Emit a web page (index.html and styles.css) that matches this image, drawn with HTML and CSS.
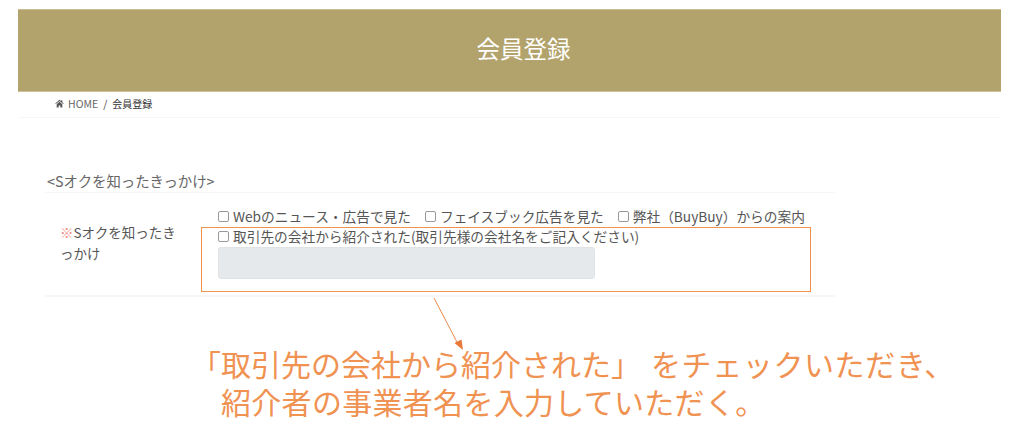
FILE: index.html
```html
<!DOCTYPE html>
<html lang="ja">
<head>
  <meta charset="UTF-8" />
  <title>会員登録</title>
  <link rel="stylesheet" href="styles.css">
</head>
<body>
  <div id="page">
    <header class="title-bar"><h1>会員登録</h1></header>

    <nav class="breadcrumb">
      <svg class="home-icon" viewBox="0 0 16 16" width="9" height="9"><path d="M8 1.5 0.5 8l1 1L8 3.5 14.500 9l1-1-2.500-2.200V2h-2v2zM3 9.500V15h3.500v-3.500h3V15H13V9.500L8 5z"/></svg>
      <span class="crumb-home">HOME</span>
      <span class="crumb-sep">/</span>
      <span class="crumb-now">会員登録</span>
    </nav>

    <section class="form-area">
      <h2>&lt;Sオクを知ったきっかけ&gt;</h2>
      <div class="form-row">
        <div class="row-label"><span class="req">※</span>Sオクを知ったき<br>っかけ</div>
        <div class="row-value">
          <div class="check-line">
            <label><input type="checkbox" />Webのニュース・広告で見た</label>
            <label><input type="checkbox" />フェイスブック広告を見た</label>
            <label><input type="checkbox" />弊社（BuyBuy）からの案内</label>
          </div>
          <div class="check-line">
            <label><input type="checkbox" />取引先の会社から紹介された(取引先様の会社名をご記入ください)</label>
          </div>
          <input type="text" class="company-input" disabled />
        </div>
      </div>
    </section>

    <!-- 注釈 -->
    <div class="note-box"></div>
    <svg class="note-arrow" width="60" height="60" viewBox="0 0 60 60">
      <line x1="7" y1="4" x2="31" y2="50" stroke="#e98a4c" stroke-width="1" />
      <polygon points="36,56 27.500,49 34.500,45.500" fill="#e8793a" />
    </svg>
    <div class="note-text">
      <p>「取引先の会社から紹介された」<span class="after-bracket">をチェックいただき、</span></p>
      <p class="second">紹介者の事業者名を入力していただく。</p>
    </div>
  </div>
</body>
</html>
```
FILE: styles.css
```css
* { box-sizing: border-box; }
html, body { margin: 0; height: 100%; }
body { background: #fff; font-family: "Noto Sans CJK JP", "Noto Sans", sans-serif; color: #555; overflow: hidden; }
#page { position: relative; width: 1024px; height: 444px; padding: 9px 23px 0 18px; }

.title-bar { height: 83px; padding: 0 0 3px 28px; background: #b2a26b; border-top: 1px solid #c9bd92; border-bottom: 1px solid #cdc29c; display: flex; align-items: center; justify-content: center; }
.title-bar h1 { margin: 0; font-size: 23.500px; font-weight: 400; color: #fff; line-height: 1; }

.breadcrumb { height: 26px; padding: 0 0 2px 37px; display: flex; align-items: center; gap: 3px; font-size: 10.500px; border-bottom: 1px solid #f7f7f7; color: #666; }
.home-icon { fill: #555; margin-right: 1px; }
.crumb-sep { margin: 0 2px; color: #444; }
.crumb-now { color: #333; font-size: 10px; }

.form-area { width: 790px; margin: 53px 0 0 27px; }
.form-area h2 { margin: 0; padding-left: 2px; height: 22px; font-size: 14.400px; line-height: 20px; font-weight: 400; color: #666; border-bottom: 1px solid #f5f5f5; }
.form-row { display: flex; height: 104px; border-bottom: 2px solid #f6f6f6; }
.row-label { width: 173px; padding: 29px 0 0 15px; font-size: 13.500px; line-height: 21px; color: #555; white-space: nowrap; }
.req { color: #ef8a80; }
.row-value { flex: 1; padding-top: 13px; }
.check-line { display: flex; gap: 14px; height: 20px; align-items: center; font-size: 13.700px; color: #555; white-space: nowrap; }
.check-line label { display: flex; align-items: center; }
.check-line input { appearance: none; width: 11px; height: 11px; margin: 0 4px 0 0; background: #fff; border: 1px solid #999; border-radius: 2px; }
.company-input { display: block; width: 377px; height: 32px; margin-top: 1px; background: #e6e9ec; border: 1px solid #dfe3e6; border-radius: 3px; }

.note-box { position: absolute; left: 201px; top: 227px; width: 610px; height: 65px; border: 1px solid #f0914d; }
.note-arrow { position: absolute; left: 427px; top: 294px; }
.note-text { position: absolute; left: 191px; top: 344px; font-size: 30px; line-height: 38px; color: #ef9252; white-space: nowrap; }
.note-text p { margin: 0; }
.note-text .second { padding-left: 30px; letter-spacing: 0.300px; }
.after-bracket { margin-left: 10px; letter-spacing: 0.600px; }
```
